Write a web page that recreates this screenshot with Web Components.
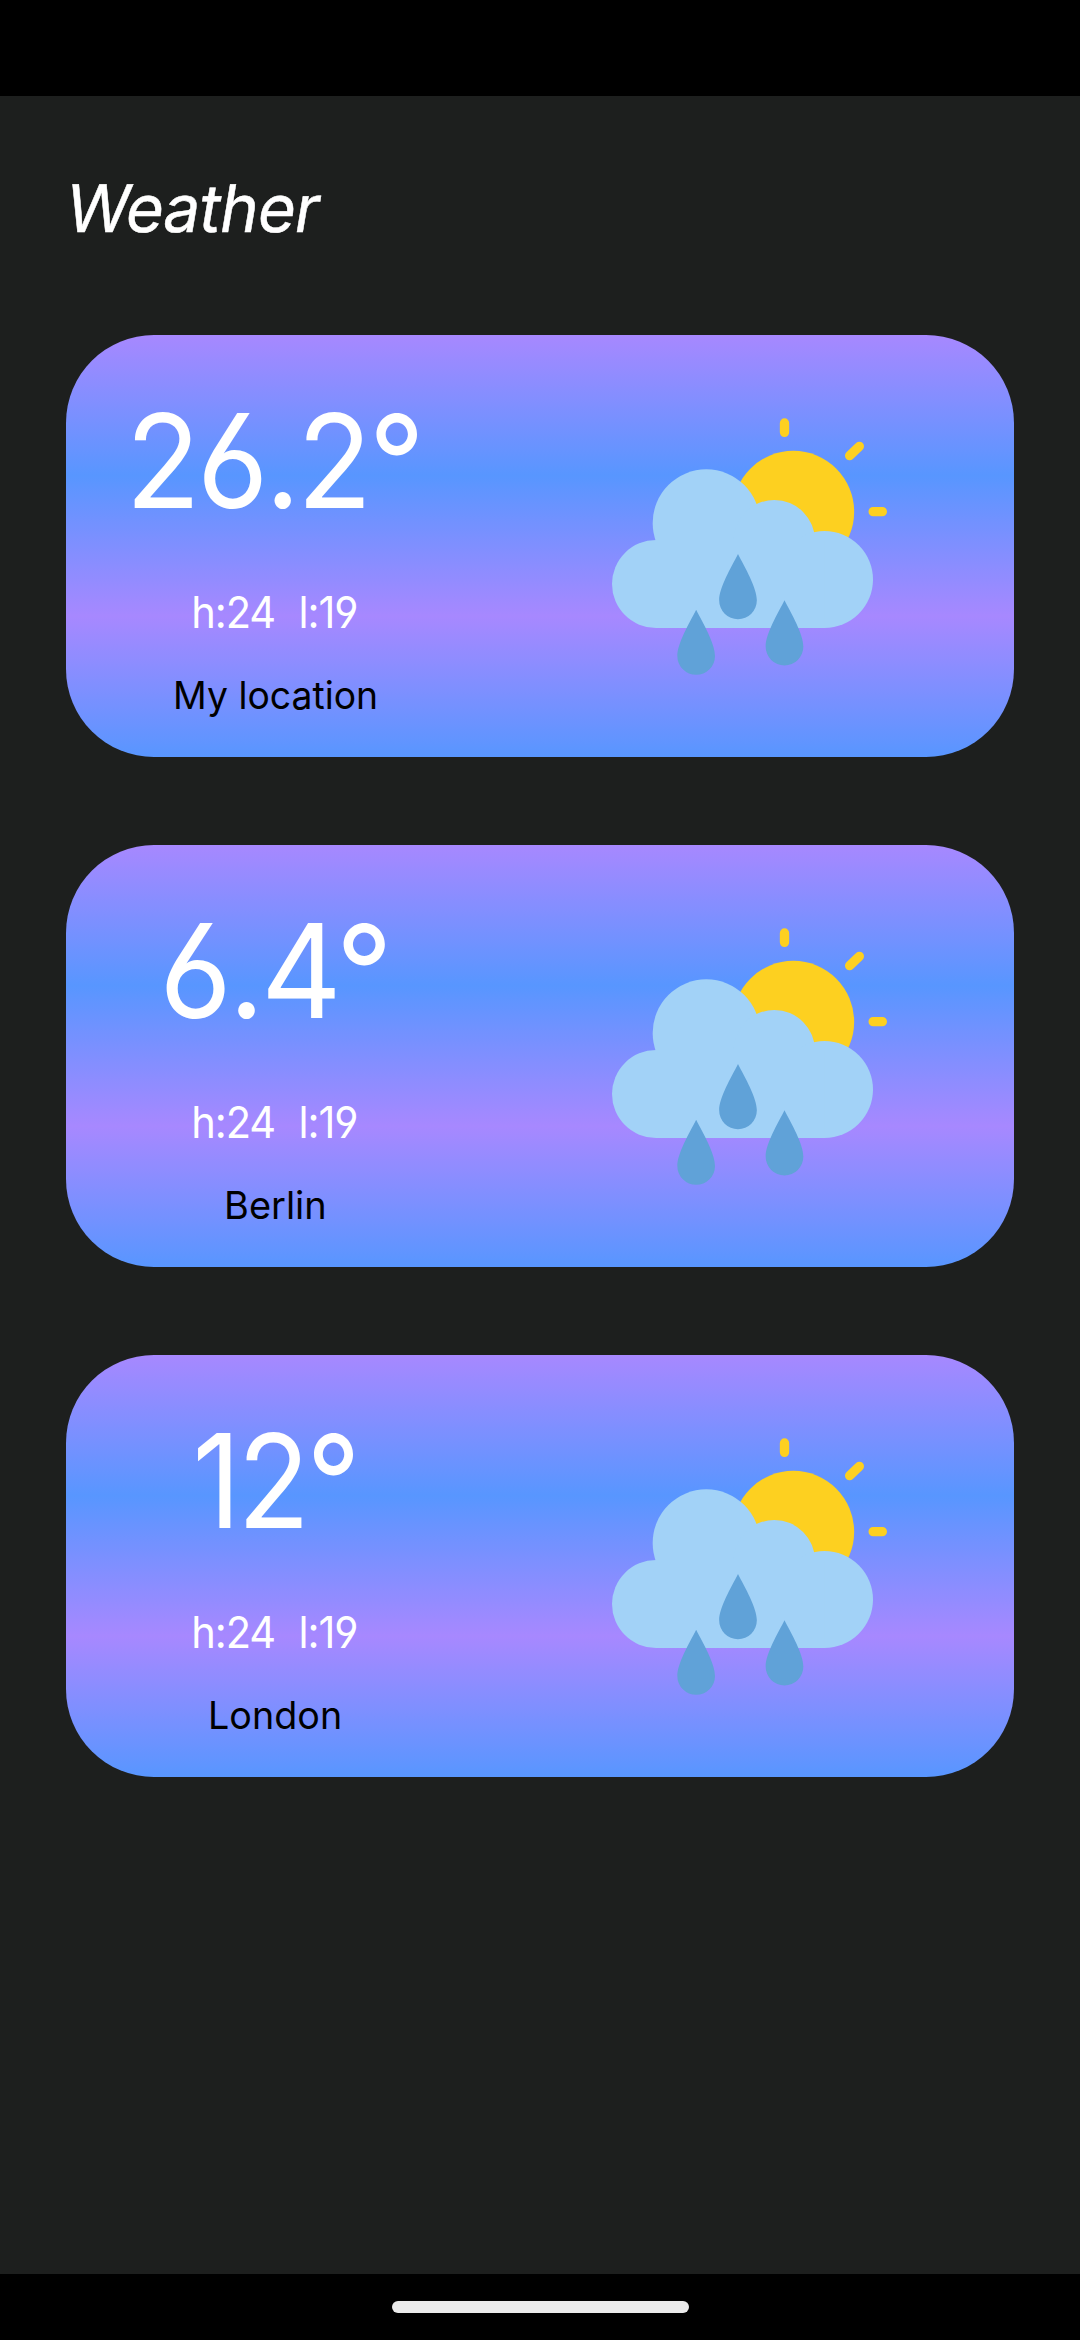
<!DOCTYPE html>
<html lang="en">
<head>
<meta charset="utf-8">
<title>Weather</title>
<style>
html, body { margin: 0; background: #000; }
body { width: 1080px; height: 2340px; overflow: hidden; }
</style>
</head>
<body>
<weather-app>
  <weather-card temp="26.2°" temp-width="283.5" range="h:24  l:19" city="My location" city-width="199.5"></weather-card>
  <weather-card temp="6.4°" temp-width="219.5" range="h:24  l:19" city="Berlin" city-width="97"></weather-card>
  <weather-card temp="12°" temp-width="155" range="h:24  l:19" city="London" city-width="128.5"></weather-card>
</weather-app>
<script>
/* A line of text whose ink is fitted to an exact width. */
class FitText extends HTMLElement {
  connectedCallback() {
    const root = this.attachShadow({ mode: 'open' });
    root.innerHTML = `<style>
      :host { display: block; white-space: pre; font-family: Inter, Roboto, sans-serif; }
      span { display: inline-block; transform-origin: 0 79%; font-feature-settings: "calt" 0, "cv03" 1, "cv04" 1; }
    </style><span></span>`;
    const span = root.querySelector('span');
    const text = this.getAttribute('text');
    const size = this.getAttribute('size');
    const target = +this.getAttribute('width');
    const track = size * (this.getAttribute('track') || 0);
    this.style.fontSize = size + 'px';
    this.style.lineHeight = this.getAttribute('line') + 'px';
    this.style.width = target + 'px';
    this.style.letterSpacing = track + 'px';
    this.style.wordSpacing = -track + 'px';
    span.textContent = text;
    const ctx = document.createElement('canvas').getContext('2d');
    ctx.font = `400 ${size}px Inter, Roboto, sans-serif`;
    ctx.letterSpacing = track + 'px';
    ctx.wordSpacing = -track + 'px';
    const m = ctx.measureText(text);
    const s = target / (m.actualBoundingBoxLeft + m.actualBoundingBoxRight);
    const skew = this.getAttribute('slant') || 0;
    span.style.transform = `translateX(${m.actualBoundingBoxLeft * s}px) skewX(${-skew}deg) scaleX(${s})`;
  }
}
customElements.define('fit-text', FitText);

class RainIcon extends HTMLElement {
  connectedCallback() {
    this.attachShadow({ mode: 'open' }).innerHTML = `<style>
      :host { display: block; width: 320px; height: 290px; }
      svg { display: block; }
    </style>
    <svg width="320" height="290" viewBox="0 0 960 870">
      <defs><path id="drop" d="M0 0C21 41 56.5 101 56.5 139A56.5 56.5 0 0 1-56.5 139C-56.5 101-21 41 0 0Z"/></defs>
      <g stroke="#fdd020" stroke-width="28" stroke-linecap="round">
        <path d="M583.5 69V97M779 167L808 139M849.5 335H877"/>
      </g>
      <circle cx="610" cy="335" r="182.5" fill="#fdd020"/>
      <g fill="#a2d2f7">
        <circle cx="349" cy="369" r="161"/>
        <circle cx="553" cy="422" r="122"/>
        <circle cx="198" cy="552" r="132"/>
        <circle cx="703.5" cy="538.5" r="145.5"/>
        <path d="M198 420H703V684H198Z"/>
      </g>
      <g fill="#60a2d8">
        <use href="#drop" x="444" y="462"/>
        <use href="#drop" x="318.5" y="629"/>
        <use href="#drop" x="583.5" y="601"/>
      </g>
    </svg>`;
  }
}
customElements.define('rain-icon', RainIcon);

class WeatherCard extends HTMLElement {
  connectedCallback() {
    const a = n => this.getAttribute(n);
    this.attachShadow({ mode: 'open' }).innerHTML = `<style>
      :host { display: flex; align-items: flex-start; box-sizing: border-box; width: 948px; height: 422px;
        padding-left: 59px; border-radius: 88px;
        background: linear-gradient(#a788ff 0%, #5896ff 33.33%, #a788ff 66.67%, #5896ff 100%); }
      .info { display: flex; flex-direction: column; align-items: center; width: 301px; padding-top: 46px; color: #fff; }
      .range { margin-top: 43px; }
      .city { margin-top: 32px; color: #000; }
      rain-icon { margin: 65px 0 0 164px; }
    </style>
    <div class="info">
      <fit-text text="${a('temp')}" width="${a('temp-width')}" size="130" line="160" track="-0.028"></fit-text>
      <fit-text class="range" text="${a('range')}" width="164" size="44" line="56" track="-0.025"></fit-text>
      <fit-text class="city" text="${a('city')}" width="${a('city-width')}" size="38.5" line="46"></fit-text>
    </div>
    <rain-icon></rain-icon>`;
  }
}
customElements.define('weather-card', WeatherCard);

class WeatherApp extends HTMLElement {
  connectedCallback() {
    this.attachShadow({ mode: 'open' }).innerHTML = `<style>
      :host { display: flex; flex-direction: column; width: 1080px; height: 2340px; background: #000; }
      .status { height: 96px; }
      main { height: 2178px; box-sizing: border-box; background: #1d1f1e; padding: 72px 66px 0 64px; color: #fff; }
      h1 { margin: 0 0 87px; font-weight: 400; -webkit-text-stroke: .5px #fff; }
      .list { display: flex; flex-direction: column; gap: 88px; padding-left: 2px; }
      nav { flex: 1; display: flex; justify-content: center; align-items: flex-start; padding-top: 27px; }
      .pill { width: 297px; height: 12px; border-radius: 6px; background: #ebebeb; }
    </style>
    <div class="status"></div>
    <main>
      <h1><fit-text slant="9.5" text="Weather" width="252" size="65.6" line="80" track="-0.01"></fit-text></h1>
      <div class="list"><slot></slot></div>
    </main>
    <nav><div class="pill"></div></nav>`;
  }
}
customElements.define('weather-app', WeatherApp);
</script>
</body>
</html>
